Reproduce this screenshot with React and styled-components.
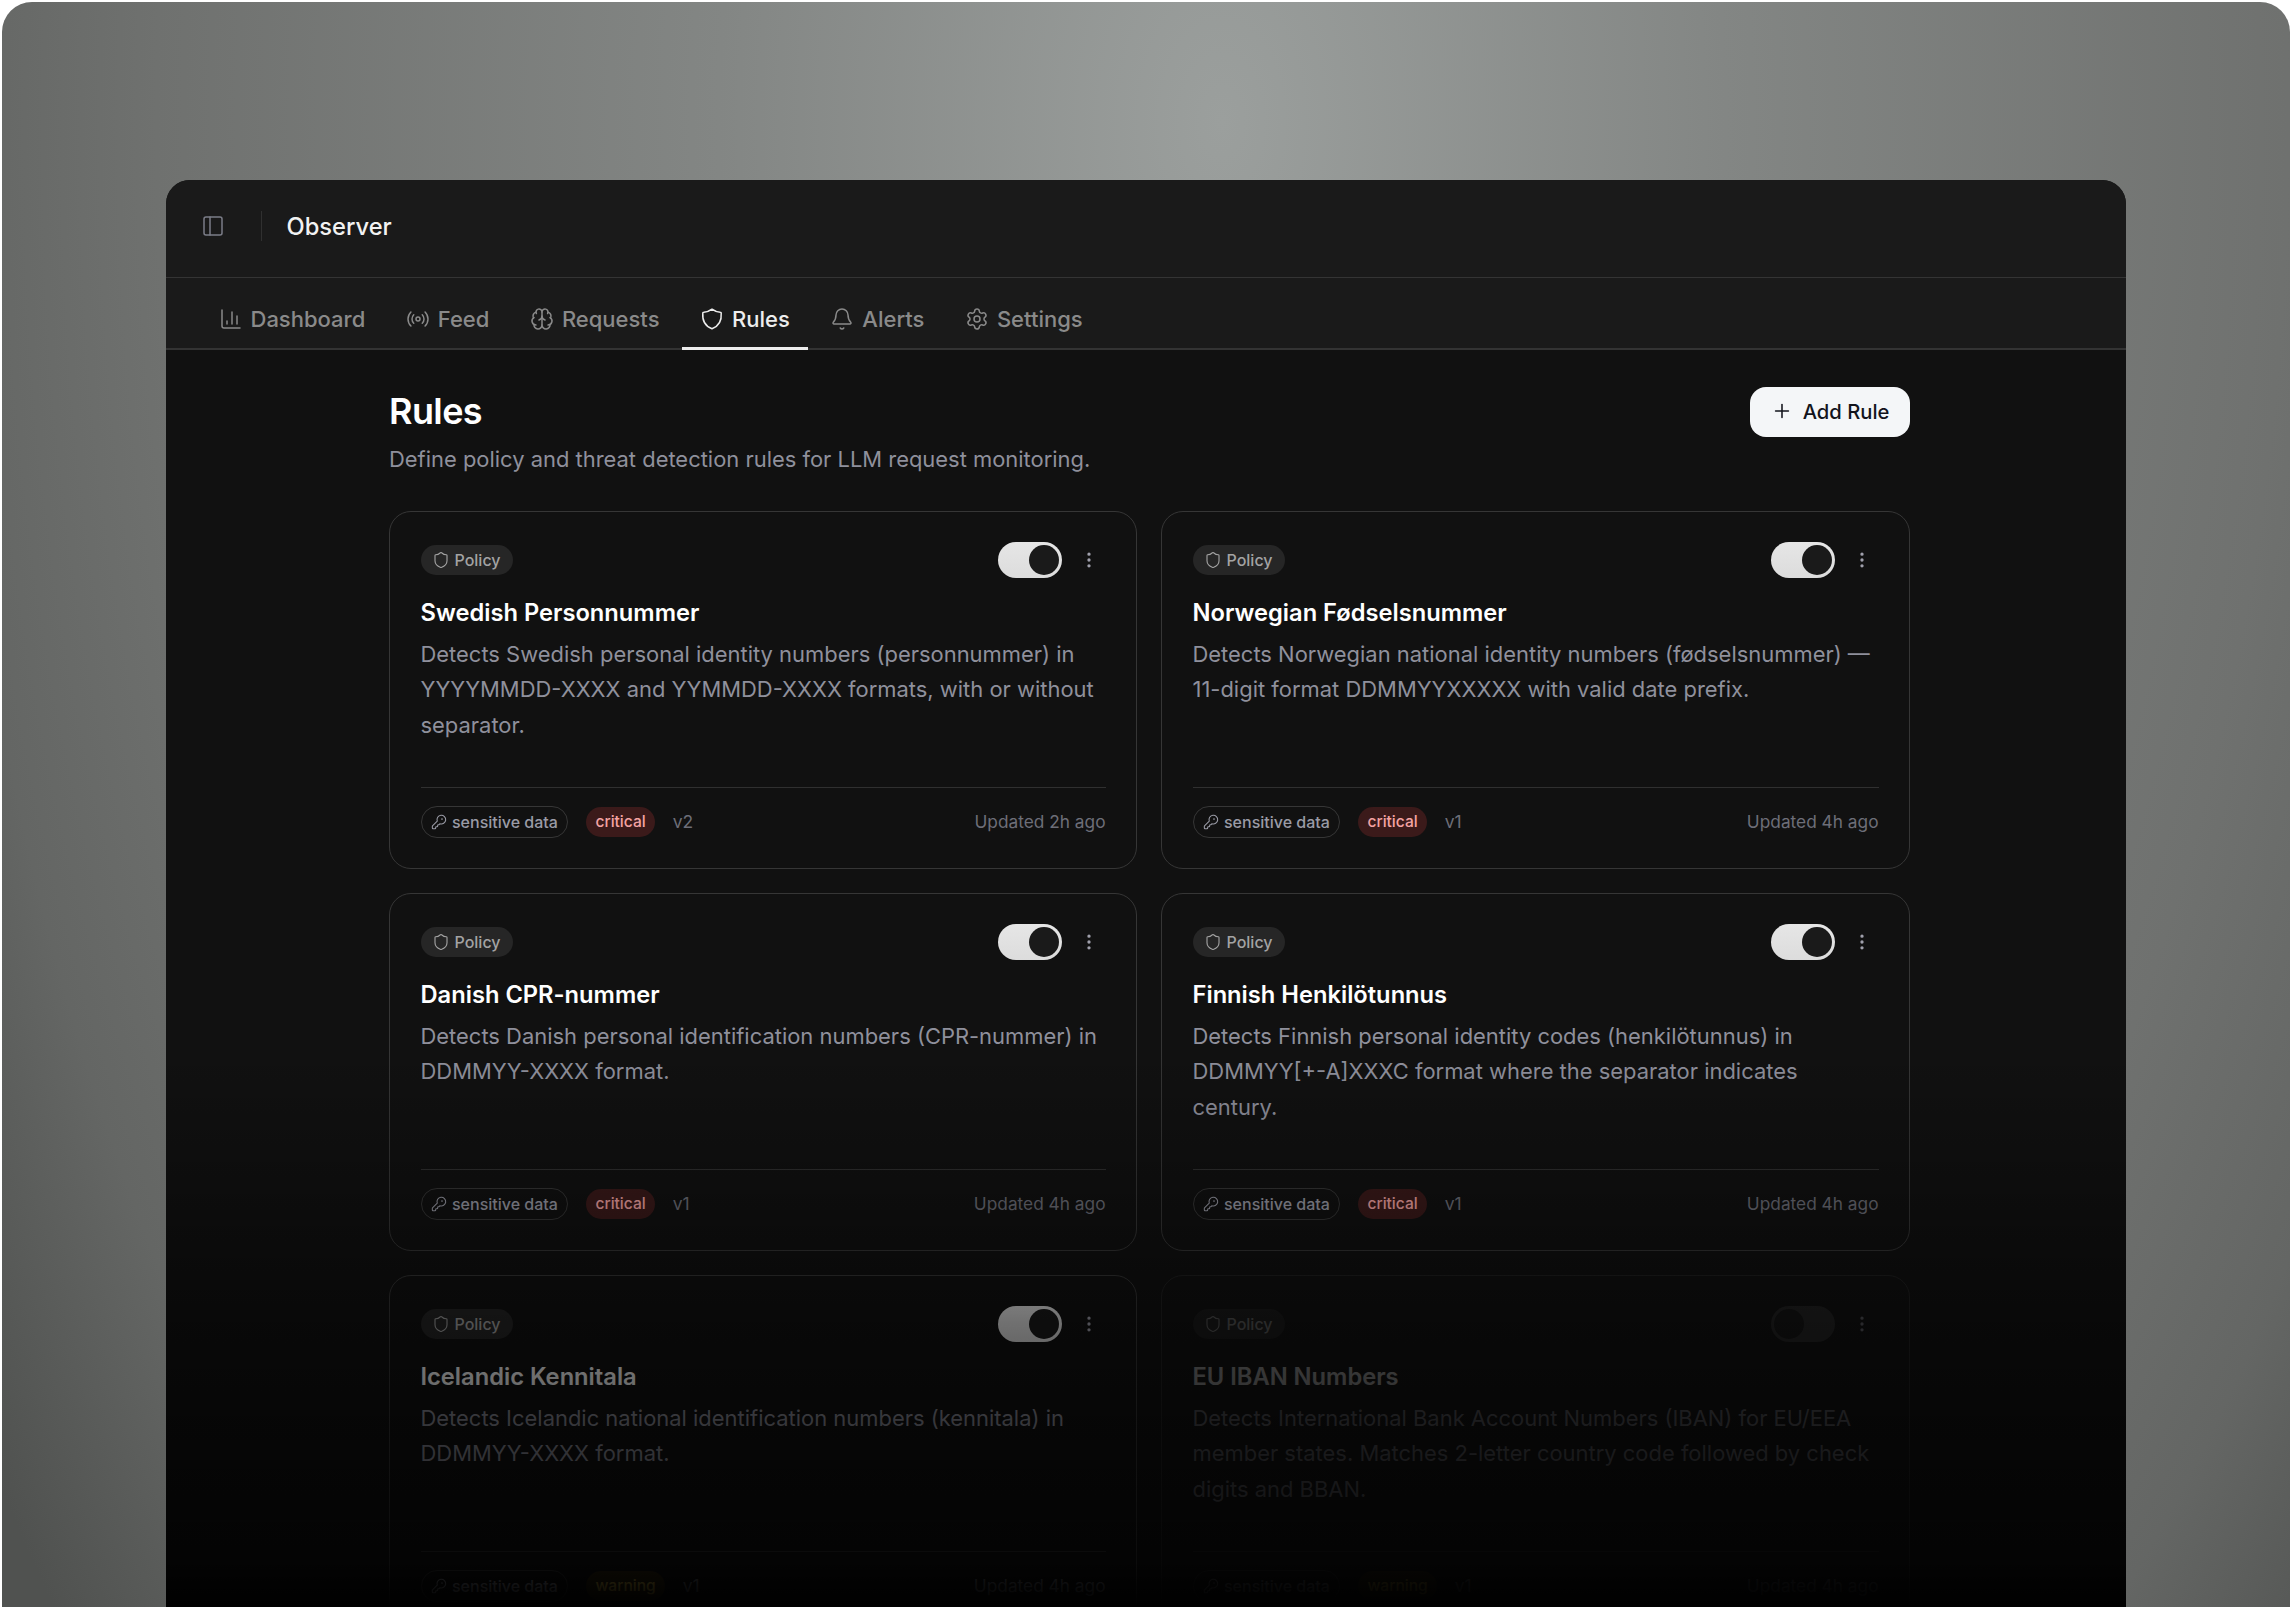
import React from 'react';
import styled, { createGlobalStyle } from 'styled-components';
import {
  ChartColumn,
  Radio,
  Brain,
  Bell,
  Settings,
  Plus,
  KeyRound,
  EllipsisVertical,
  PanelLeft,
  Shield,
} from 'lucide-react';

const GlobalStyle = createGlobalStyle`
  html, body {
    margin: 0;
    padding: 0;
    background: #ffffff;
    font-family: Inter, "Liberation Sans", sans-serif;
  }
`;

const Stage = styled.div`
  width: 2292px;
  height: 1607px;
  box-sizing: border-box;
  padding: 2px 2px 0;
  overflow: hidden;
`;

const Backdrop = styled.div`
  height: 1605px;
  box-sizing: border-box;
  padding: 178px 164px 0;
  border-radius: 30px 30px 0 0;
  overflow: hidden;
  background:
    radial-gradient(ellipse 1480px 2420px at 1220px 120px, #9b9f9d 0%, #838684 34%, #6f716f 72%, #646664 86%, #505250 100%);
`;

const Window = styled.div`
  position: relative;
  height: 1427px;
  border-radius: 24px 24px 0 0;
  overflow: hidden;
  background: #111111;
`;

const Fade = styled.div`
  position: absolute;
  left: 0;
  right: 0;
  bottom: 0;
  height: 557px;
  pointer-events: none;
  background: linear-gradient(
    to bottom,
    rgba(0, 0, 0, 0) 0%,
    rgba(0, 0, 0, 0.5) 49%,
    rgba(0, 0, 0, 0.62) 66%,
    rgba(0, 0, 0, 0.78) 92%,
    rgba(0, 0, 0, 1) 100%
  );
`;

const TopBar = styled.header`
  display: flex;
  align-items: center;
  height: 98px;
  padding: 0 0 5px 35px;
  box-sizing: border-box;
  background: #1a1a1a;
  border-bottom: 1px solid #343434;
  color: #7b7d88;
`;

const BarDivider = styled.span`
  width: 1px;
  height: 30px;
  margin: 0 24.5px 0 36px;
  background: #303030;
`;

const AppName = styled.span`
  font-size: 23.7px;
  font-weight: 500;
  color: #f2f2f2;
`;

const TabBar = styled.nav`
  display: flex;
  align-items: stretch;
  gap: 4.5px;
  height: 72px;
  padding: 0 0 0 34.5px;
  box-sizing: border-box;
  background: #1a1a1a;
  border-bottom: 2px solid #333333;
`;

const Tab = styled.a`
  display: flex;
  align-items: center;
  gap: 8px;
  margin-bottom: -2px;
  padding: 13px 18px 0;
  font-size: 22px;
  font-weight: 500;
  color: ${(p) => (p.$active ? '#ededed' : '#8a8a8a')};
  border-bottom: 3px solid ${(p) => (p.$active ? '#ededed' : 'transparent')};
`;

const Content = styled.main`
  width: 1521px;
  margin-left: 223px;
  padding-top: 37px;
`;

const PageHead = styled.div`
  display: flex;
  justify-content: space-between;
  align-items: flex-start;
  margin-bottom: 36px;
`;

const PageTitle = styled.h1`
  margin: 0;
  font-size: 36px;
  line-height: 49px;
  font-weight: 600;
  letter-spacing: -0.6px;
  color: #ffffff;
`;

const PageSub = styled.p`
  margin: 6.5px 0 0;
  font-size: 21.93px;
  line-height: 32px;
  color: #8f909c;
`;

const AddButton = styled.button`
  display: flex;
  align-items: center;
  justify-content: center;
  gap: 10px;
  width: 160px;
  height: 50px;
  padding: 0 0 2px;
  border: 0;
  border-radius: 16px;
  background: #f4f6f8;
  color: #12141c;
  font-family: inherit;
  font-size: 20.2px;
  font-weight: 500;
`;

const CardGrid = styled.section`
  display: grid;
  grid-template-columns: 748px 749px;
  grid-auto-rows: 358px;
  gap: 24px;
`;

const Card = styled.article`
  display: flex;
  flex-direction: column;
  box-sizing: border-box;
  padding: 30px 30.5px;
  border: 1.5px solid #363636;
  border-radius: 22px;
  opacity: ${(p) => (p.$off ? 0.45 : 1)};
`;

const CardHead = styled.div`
  display: flex;
  align-items: center;
  justify-content: space-between;
  height: 36px;
`;

const TypeBadge = styled.span`
  display: inline-flex;
  align-items: center;
  gap: 5px;
  height: 30px;
  padding: 0 12px 0 11px;
  border-radius: 15px;
  background: #262626;
  color: #a3a3a3;
  font-size: 16px;
  font-weight: 500;
`;

const CardControls = styled.div`
  display: flex;
  align-items: center;
  gap: 16.5px;
  margin-right: 7px;
  color: #a0a0ac;
`;

const Toggle = styled.span`
  display: flex;
  justify-content: ${(p) => (p.$on ? 'flex-end' : 'flex-start')};
  align-items: center;
  width: 64px;
  height: 36px;
  box-sizing: border-box;
  padding: 0 3px;
  border-radius: 18px;
  background: ${(p) => (p.$on ? 'linear-gradient(#e6e6e6, #dcdcdc)' : '#3a3a3a')};
`;

const Thumb = styled.span`
  width: 30px;
  height: 30px;
  border-radius: 50%;
  background: #1a1a1a;
`;

const CardTitle = styled.h3`
  margin: 18.5px 0 0;
  font-size: 23.7px;
  line-height: 34px;
  font-weight: 600;
  color: #ffffff;
`;

const CardText = styled.p`
  flex: 1;
  margin: 6.5px 0 0;
  font-size: 21.95px;
  line-height: 35.6px;
  color: #8f909c;
`;

const CardFoot = styled.div`
  display: flex;
  align-items: center;
  height: 32px;
  padding-top: 18px;
  border-top: 1.5px solid #303030;
`;

const TagChip = styled.span`
  display: inline-flex;
  align-items: center;
  gap: 5px;
  height: 32px;
  box-sizing: border-box;
  padding: 0 9.5px;
  border: 1.5px solid #363636;
  border-radius: 16px;
  color: #9a9ba6;
  font-size: 16px;
  font-weight: 500;
`;

const SeverityChip = styled.span`
  display: inline-flex;
  align-items: center;
  height: 30px;
  margin-left: 18px;
  padding: 0 9px;
  border-radius: 15px;
  font-size: 15.6px;
  font-weight: 500;
  color: ${(p) => (p.$level === 'critical' ? '#f4a3a3' : '#e8c74a')};
  background: ${(p) => (p.$level === 'critical' ? '#3b1a1a' : '#33290f')};
`;

const Version = styled.span`
  margin-left: 18px;
  color: #6d6e78;
  font-size: 17.5px;
`;

const Updated = styled.span`
  margin-left: auto;
  color: #6d6e78;
  font-size: 17.3px;
`;

// the tab shield is wider than lucide's one
const WideShield = ({ size = 24, strokeWidth = 1.6 }) => (
  <svg width={size} height={size} viewBox="0 0 24 24" fill="none" stroke="currentColor" strokeWidth={strokeWidth} strokeLinecap="round" strokeLinejoin="round">
    <path d="M12 2.2c2.6 2 5.4 2.9 8.2 3 .7 0 1.1.4 1 1.100.6 7.200-2.400 12.900-9.200 15.500-6.800-2.600-9.800-8.300-9.200-15.500-.1-.7.300-1.100 1-1.100 2.800-.1 5.600-1 8.200-3z" />
  </svg>
);

const tabs = [
  { label: 'Dashboard', Icon: ChartColumn },
  { label: 'Feed', Icon: Radio },
  { label: 'Requests', Icon: Brain },
  { label: 'Rules', Icon: WideShield, active: true },
  { label: 'Alerts', Icon: Bell },
  { label: 'Settings', Icon: Settings },
];

const rules = [
  {
    name: 'Swedish Personnummer',
    text: 'Detects Swedish personal identity numbers (personnummer) in YYYYMMDD-XXXX and YYMMDD-XXXX formats, with or without separator.',
    level: 'critical',
    version: 'v2',
    updated: 'Updated 2h ago',
    on: true,
  },
  {
    name: 'Norwegian Fødselsnummer',
    text: 'Detects Norwegian national identity numbers (fødselsnummer) — 11-digit format DDMMYYXXXXX with valid date prefix.',
    level: 'critical',
    version: 'v1',
    updated: 'Updated 4h ago',
    on: true,
  },
  {
    name: 'Danish CPR-nummer',
    text: 'Detects Danish personal identification numbers (CPR-nummer) in DDMMYY-XXXX format.',
    level: 'critical',
    version: 'v1',
    updated: 'Updated 4h ago',
    on: true,
  },
  {
    name: 'Finnish Henkilötunnus',
    text: 'Detects Finnish personal identity codes (henkilötunnus) in DDMMYY[+-A]XXXC format where the separator indicates century.',
    level: 'critical',
    version: 'v1',
    updated: 'Updated 4h ago',
    on: true,
  },
  {
    name: 'Icelandic Kennitala',
    text: 'Detects Icelandic national identification numbers (kennitala) in DDMMYY-XXXX format.',
    level: 'warning',
    version: 'v1',
    updated: 'Updated 4h ago',
    on: true,
  },
  {
    name: 'EU IBAN Numbers',
    text: 'Detects International Bank Account Numbers (IBAN) for EU/EEA member states. Matches 2-letter country code followed by check digits and BBAN.',
    level: 'warning',
    version: 'v1',
    updated: 'Updated 4h ago',
    on: false,
  },
];

const RuleCard = ({ rule }) => (
  <Card $off={!rule.on}>
    <CardHead>
      <TypeBadge>
        <Shield size={18} strokeWidth={1.5} />
        Policy
      </TypeBadge>
      <CardControls>
        <Toggle $on={rule.on}>
          <Thumb />
        </Toggle>
        <EllipsisVertical size={20} strokeWidth={2} />
      </CardControls>
    </CardHead>
    <CardTitle>{rule.name}</CardTitle>
    <CardText>{rule.text}</CardText>
    <CardFoot>
      <TagChip>
        <KeyRound size={16} strokeWidth={1.6} />
        sensitive data
      </TagChip>
      <SeverityChip $level={rule.level}>{rule.level}</SeverityChip>
      <Version>{rule.version}</Version>
      <Updated>{rule.updated}</Updated>
    </CardFoot>
  </Card>
);

const App = () => (
  <Stage>
    <GlobalStyle />
    <Backdrop>
      <Window>
        <TopBar>
          <PanelLeft size={24} strokeWidth={1.5} />
          <BarDivider />
          <AppName>Observer</AppName>
        </TopBar>
        <TabBar>
          {tabs.map(({ label, Icon, active }) => (
            <Tab key={label} $active={active}>
              <Icon size={24} strokeWidth={1.5} />
              {label}
            </Tab>
          ))}
        </TabBar>
        <Content>
          <PageHead>
            <div>
              <PageTitle>Rules</PageTitle>
              <PageSub>Define policy and threat detection rules for LLM request monitoring.</PageSub>
            </div>
            <AddButton>
              <Plus size={22} strokeWidth={1.7} />
              Add Rule
            </AddButton>
          </PageHead>
          <CardGrid>
            {rules.map((rule) => (
              <RuleCard key={rule.name} rule={rule} />
            ))}
          </CardGrid>
        </Content>
        <Fade />
      </Window>
    </Backdrop>
  </Stage>
);

export default App;
